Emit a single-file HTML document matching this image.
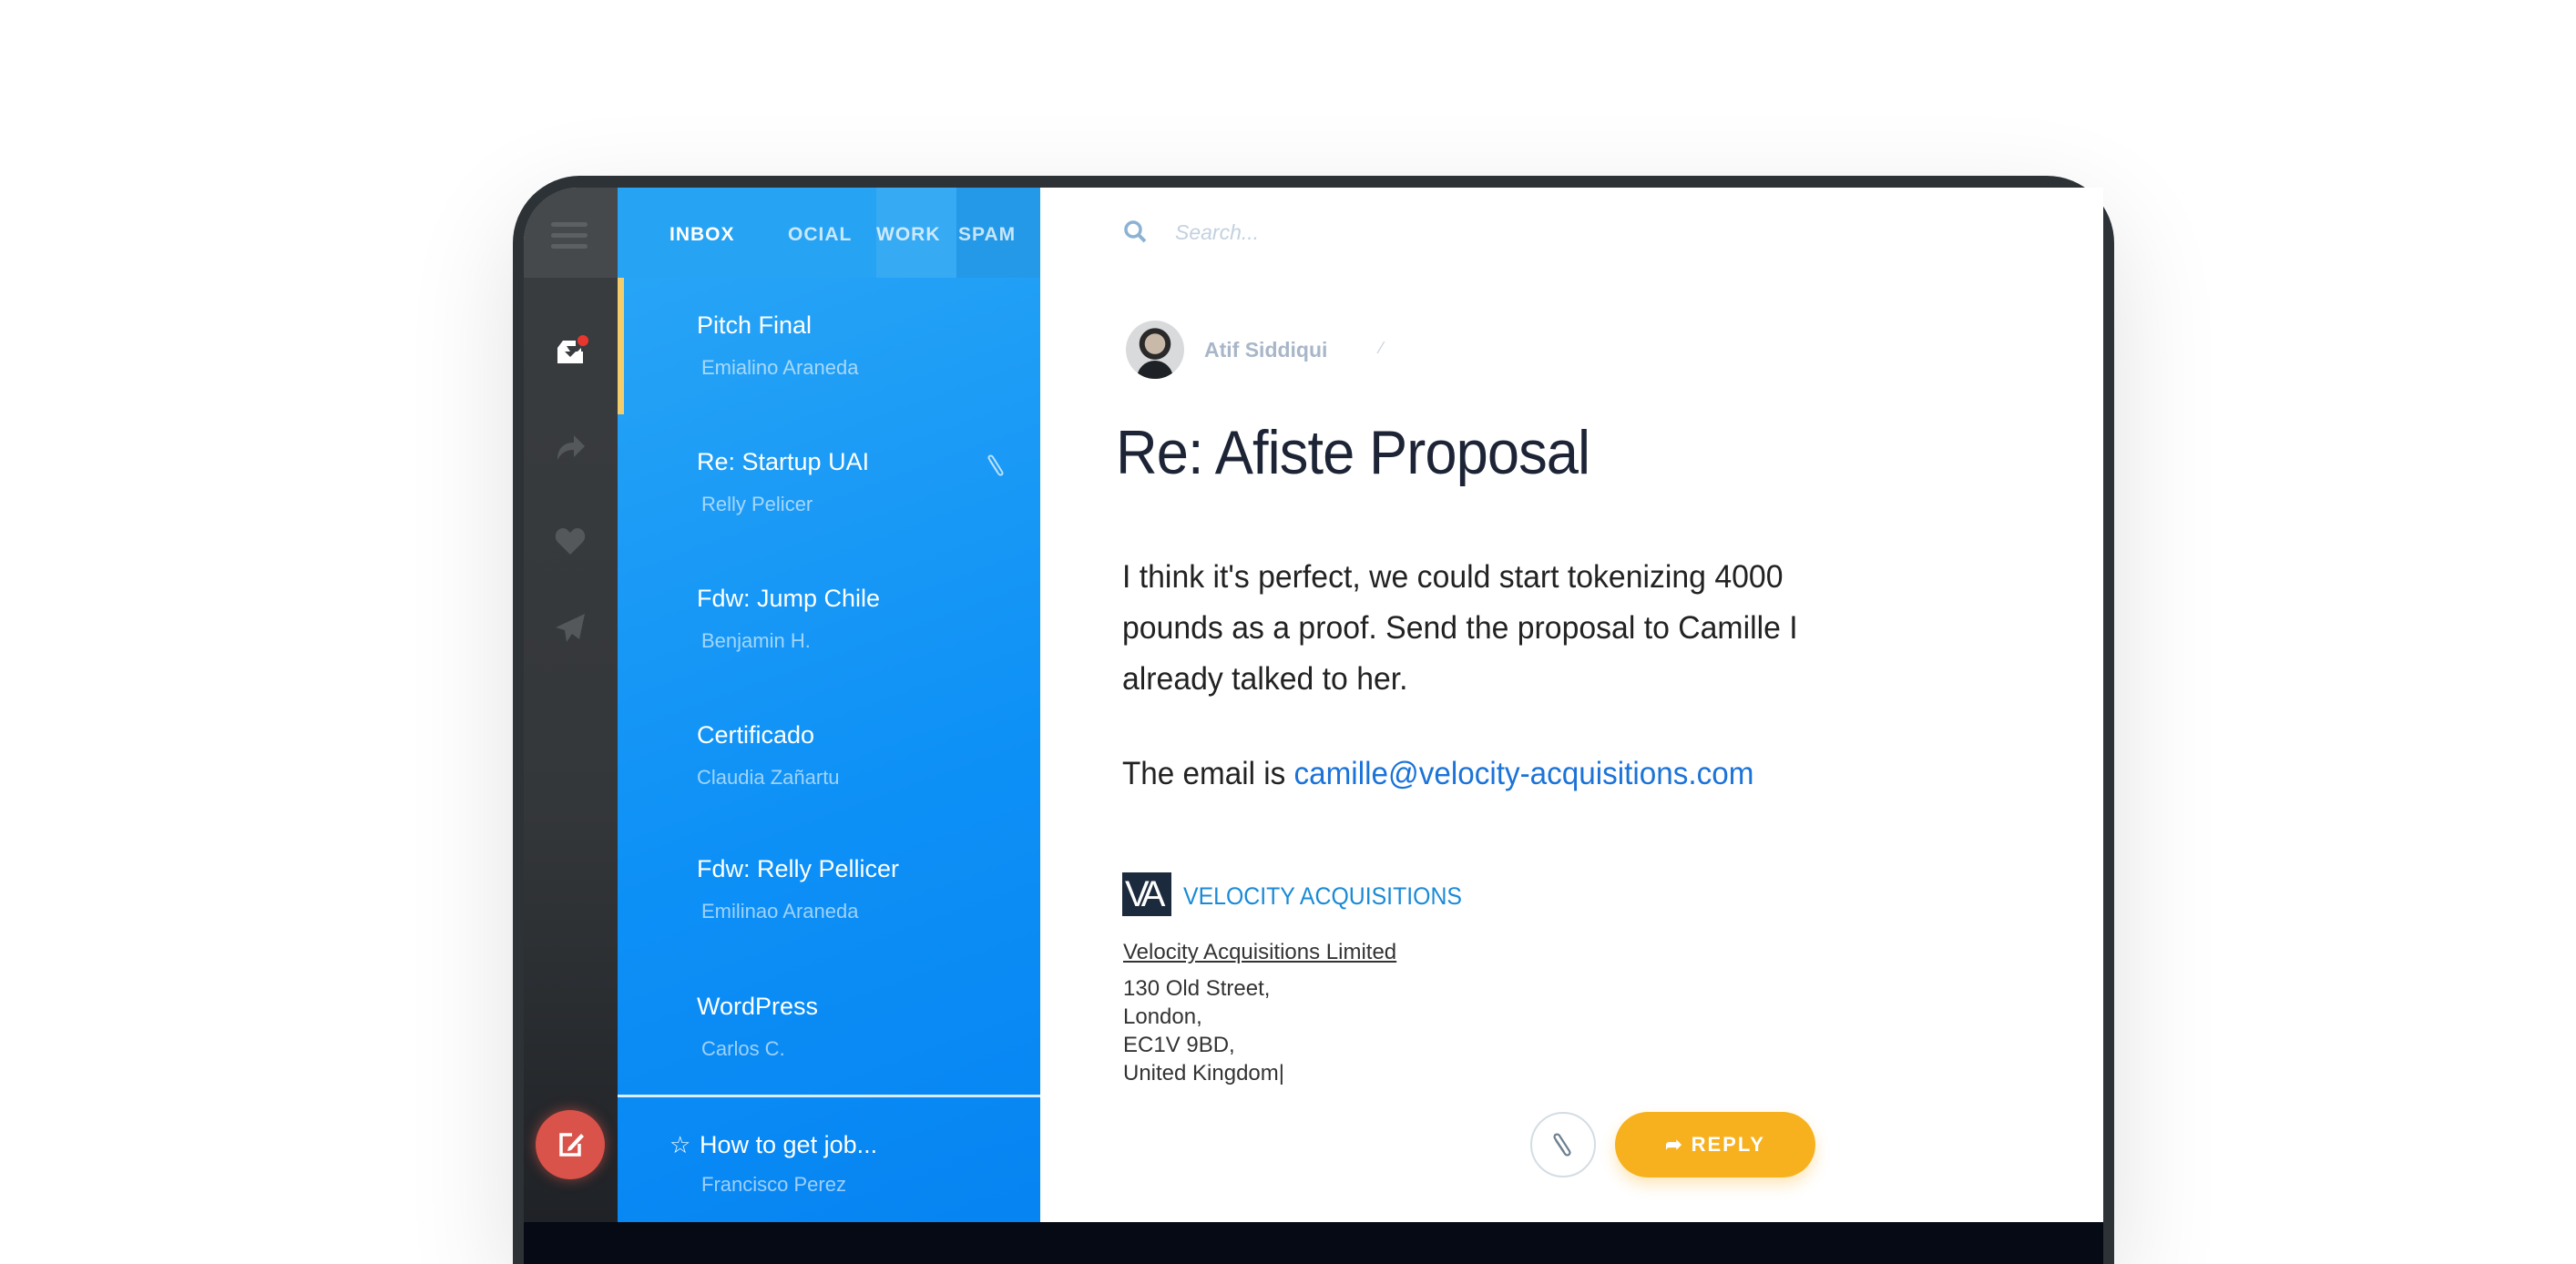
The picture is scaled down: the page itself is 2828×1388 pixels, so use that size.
<!DOCTYPE html>
<html><head><meta charset="utf-8"><style>
*{margin:0;padding:0;box-sizing:border-box}
html{width:2828px;height:1388px;overflow:hidden}
body{width:2828px;height:1388px;background:#fff;position:relative;overflow:hidden;font-family:"Liberation Sans",sans-serif}
.a{position:absolute}
.frame{left:563px;top:193px;width:1758px;height:1195px;background:#2c3236;border-radius:74px 74px 0 0;box-shadow:0 40px 120px rgba(0,0,0,.12)}
.screen{left:575px;top:206px;width:1734px;height:1136px;background:#fff;border-radius:60px 0 0 0;overflow:hidden}
.bez{left:575px;top:1342px;width:1734px;height:46px;background:#060a14}
.side{left:0;top:0;width:103px;height:1136px;background:linear-gradient(#3a3d40,#34373a 60%,#1f2226)}
.sideh{left:0;top:0;width:103px;height:99px;background:#46494c}
.list{left:103px;top:0;width:464px;height:1136px;background:linear-gradient(160deg,#2ba7f6,#0d90f6 60%,#0684f2)}
.t{color:#fff;font-size:27px}
.s{color:rgba(255,255,255,.6);font-size:22px}
.tab{color:rgba(255,255,255,.75);font-size:21px;font-weight:bold;letter-spacing:1px;top:40px}
</style></head><body>
<div class="a frame"></div>
<div class="a bez"></div>
<div class="a screen">
 <div class="a side">
  <div class="a sideh"></div>
  <div class="a" style="left:30px;top:38px;width:40px;height:5px;background:#5d6063;border-radius:3px;box-shadow:0 12px 0 #5d6063,0 24px 0 #5d6063"></div>
  <svg class="a" style="left:33px;top:162px" width="40" height="36" viewBox="0 0 40 36"><path d="M4 14 L10 6 H24 V12 H14 L18 18 H4 V30 H30 V18 H26 L30 14 V30 H4Z" fill="#fff"/><rect x="4" y="18" width="28" height="13" fill="#fff"/><path d="M12 18 L18 24 L24 18" fill="#3a3d40"/><circle cx="32" cy="6" r="6" fill="#e8362f"/></svg>
  <svg class="a" style="left:33px;top:267px" width="36" height="36" viewBox="0 0 36 36"><path d="M4 32 C4 18 12 13 22 13 V5 L34 17 L22 29 V21 C14 21 8 24 4 32Z" fill="#55585b"/></svg>
  <svg class="a" style="left:34px;top:372px" width="34" height="32" viewBox="0 0 34 32"><path d="M17 31 L3 17 C-2 11 2 2 9 2 C13 2 15 5 17 7 C19 5 21 2 25 2 C32 2 36 11 31 17Z" fill="#55585b"/></svg>
  <svg class="a" style="left:33px;top:466px" width="36" height="36" viewBox="0 0 36 36"><path d="M34 2 L2 17 L12 20 L14 33 L20 24 L28 30Z" fill="#55585b"/></svg>
  <div class="a" style="left:13px;top:1013px;width:76px;height:76px;border-radius:50%;background:#d9534a;box-shadow:0 0 14px rgba(217,83,74,.6)"></div>
  <svg class="a" style="left:35px;top:1034px" width="34" height="34" viewBox="0 0 34 34"><path d="M18 6 H6 V28 H26 V16" fill="none" stroke="#fff" stroke-width="3.5"/><path d="M14 20 L28 5 L31 8 L17 23 L13 24Z" fill="#fff"/></svg>
 </div>
 <div class="a list">
  <div class="a" style="left:0;top:0;width:464px;height:99px;background:#27a3f4"></div>
  <div class="a" style="left:284px;top:0;width:88px;height:99px;background:rgba(255,255,255,.08)"></div>
  <div class="a" style="left:372px;top:0;width:92px;height:99px;background:rgba(0,40,90,.08)"></div>
  <div class="a tab" style="left:57px;color:#fff">INBOX</div>
  <div class="a tab" style="left:187px">OCIAL</div>
  <div class="a tab" style="left:284px">WORK</div>
  <div class="a tab" style="left:374px">SPAM</div>
  <div class="a" style="left:0;top:99px;width:7px;height:150px;background:#f3cd6b"></div>
  <div class="a t" style="left:87px;top:136px">Pitch Final</div><div class="a s" style="left:92px;top:185px">Emialino Araneda</div>
  <div class="a t" style="left:87px;top:286px">Re: Startup UAI</div><div class="a s" style="left:92px;top:335px">Relly Pelicer</div>
  <svg class="a" style="top:290px;left:403px" width="24" height="30" viewBox="0 0 24 30"><path d="M6 10 L15 24 C17 27 21 25 19 22 L9 6 C7 3 3 5 5 8 L14 22" fill="none" stroke="rgba(255,255,255,.7)" stroke-width="2"/></svg>
  <div class="a t" style="left:87px;top:436px">Fdw: Jump Chile</div><div class="a s" style="left:92px;top:485px">Benjamin H.</div>
  <div class="a t" style="left:87px;top:586px">Certificado</div><div class="a s" style="left:87px;top:635px">Claudia Zañartu</div>
  <div class="a t" style="left:87px;top:733px">Fdw: Relly Pellicer</div><div class="a s" style="left:92px;top:782px">Emilinao Araneda</div>
  <div class="a t" style="left:87px;top:884px">WordPress</div><div class="a s" style="left:92px;top:933px">Carlos C.</div>
  <div class="a" style="left:0;top:996px;width:464px;height:3px;background:rgba(255,255,255,.85)"></div>
  <div class="a t" style="left:57px;top:1036px;font-size:26px">☆</div>
  <div class="a t" style="left:90px;top:1036px">How to get job...</div><div class="a s" style="left:92px;top:1082px">Francisco Perez</div>
 </div>
 <svg class="a" style="left:657px;top:34px" width="30" height="30" viewBox="0 0 30 30"><circle cx="12" cy="12" r="8" fill="none" stroke="#8cb2d3" stroke-width="3.5"/><path d="M18 18 L25 25" stroke="#8cb2d3" stroke-width="4"/></svg>
 <div class="a" style="left:715px;top:36px;font-size:23px;font-style:italic;color:#c3d1df">Search...</div>
 <div class="a" style="left:661px;top:146px;width:64px;height:64px;border-radius:50%;background:radial-gradient(circle at 50% 40%,#c9b9a8 0 22%,#2a2a2a 23% 34%,#d8dadc 35%);overflow:hidden"><div class="a" style="left:12px;top:44px;width:40px;height:24px;border-radius:20px 20px 0 0;background:#1e2226"></div></div>
 <div class="a" style="left:747px;top:165px;font-size:23px;font-weight:bold;color:#a8b7c8">Atif Siddiqui</div>
 <div class="a" style="left:940px;top:166px;font-size:18px;color:#c5cfd9">⁄</div>
 <div class="a" style="left:650px;top:252px;font-size:68px;color:#1d2436;letter-spacing:-1px;transform:scaleX(.93);transform-origin:left;white-space:nowrap">Re: Afiste Proposal</div>
 <div class="a" style="left:657px;top:400px;font-size:35px;line-height:56px;color:#222;width:900px;transform:scaleX(.965);transform-origin:left">I think it's perfect, we could start tokenizing 4000<br>pounds as a proof. Send the proposal to Camille I<br>already talked to her.</div>
 <div class="a" style="left:657px;top:624px;font-size:35px;color:#222;transform:scaleX(.95);transform-origin:left;white-space:nowrap">The email is <span style="color:#1b73d8">camille@velocity-acquisitions.com</span></div>
 <div class="a" style="left:657px;top:752px;width:54px;height:48px;background:#1c2a3d"></div>
 <div class="a" style="left:660px;top:754px;font-size:40px;color:#fff;letter-spacing:-6px">VA</div>
 <div class="a" style="left:724px;top:763px;font-size:27px;color:#1a8ad6;transform:scaleX(.92);transform-origin:left;white-space:nowrap">VELOCITY ACQUISITIONS</div>
 <div class="a" style="left:658px;top:826px;font-size:24px;color:#333;text-decoration:underline">Velocity Acquisitions Limited</div>
 <div class="a" style="left:658px;top:864px;font-size:24px;line-height:31px;color:#333">130 Old Street,<br>London,<br>EC1V 9BD,<br>United Kingdom|</div>
 <div class="a" style="left:1105px;top:1015px;width:72px;height:72px;border-radius:50%;border:2px solid #d3dde3;background:#fff"></div>
 <svg class="a" style="left:1126px;top:1036px" width="30" height="30" viewBox="0 0 30 30"><path d="M7 10 L17 25 C19 28 24 26 22 22 L11 5 C9 2 4 4 6 8 L16 23" fill="none" stroke="#6d7f8f" stroke-width="2.2"/></svg>
 <div class="a" style="left:1198px;top:1015px;width:220px;height:72px;border-radius:36px;background:#f7b11e;box-shadow:0 8px 16px rgba(247,177,30,.3);color:#fff;font-weight:bold;font-size:22px;letter-spacing:2px;line-height:72px;text-align:center">&#10150;&nbsp;REPLY</div>
</div>
</body></html>
